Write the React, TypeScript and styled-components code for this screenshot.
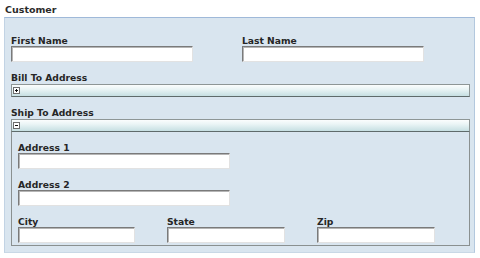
import React from "react";
import styled, { createGlobalStyle } from "styled-components";

const GlobalStyle = createGlobalStyle`
  html, body {
    margin: 0;
    padding: 0;
    background: #ffffff;
  }
  body {
    font-family: "DejaVu Sans", Verdana, sans-serif;
    color: #2b2b2b;
  }
`;

const Page = styled.div`
  width: 480px;
  height: 258px;
  padding: 4px 5px 0 4px;
  box-sizing: border-box;
`;

const Title = styled.div`
  font-size: 9.5px;
  font-weight: bold;
  line-height: 12px;
  padding-left: 1px;
  height: 13px;
`;

const Panel = styled.div`
  width: 471px;
  box-sizing: border-box;
  background: #d9e5ef;
  border-top: 1px solid #9fb9d9;
  border-left: 1px solid #c2d3e4;
  border-right: 1px solid #b3c8de;
  border-bottom: 1px solid #c9d8e6;
  padding: 17px 4px 6px 6px;
  display: flex;
  flex-direction: column;
  gap: 10px;
`;

const Grid = styled.div<{ $cols: string }>`
  display: grid;
  grid-template-columns: ${(p) => p.$cols};
  row-gap: 10px;
`;

const Field = styled.div`
  display: flex;
  flex-direction: column;
`;

const Label = styled.label`
  font-size: 9.2px;
  font-weight: bold;
  line-height: 11px;
  height: 11px;
  color: #262626;
  white-space: nowrap;
`;

const TextBox = styled.input<{ $w: number }>`
  width: ${(p) => p.$w}px;
  height: 16px;
  box-sizing: border-box;
  margin: 0;
  padding: 0 2px;
  background: #ffffff;
  border: 1px solid;
  border-color: #7a7a7a #e2e2e2 #e2e2e2 #7a7a7a;
  box-shadow: inset 1px 1px 0 #b5b5b5;
  font-family: inherit;
  font-size: 10px;
  outline: none;
`;

const Section = styled.div`
  display: flex;
  flex-direction: column;
`;

const Bar = styled.div`
  margin-top: 1px;
  height: 13px;
  box-sizing: border-box;
  border: 1px solid #8e9696;
  border-bottom-color: #5f6b6b;
  background: linear-gradient(#fbfdfd 0%, #e9f4f5 40%, #c6dfe2 100%);
  display: flex;
  align-items: center;
  padding-left: 1px;
`;

const Toggle = styled.span`
  width: 7px;
  height: 7px;
  box-sizing: border-box;
  border: 1px solid #6d6d6d;
  background: #ffffff;
  position: relative;
  display: inline-block;

  &::before {
    content: "";
    position: absolute;
    left: 1px;
    top: 2px;
    width: 3px;
    height: 1px;
    background: #111;
  }
`;

const PlusToggle = styled(Toggle)`
  &::after {
    content: "";
    position: absolute;
    left: 2px;
    top: 1px;
    width: 1px;
    height: 3px;
    background: #111;
  }
`;

const Body = styled.div`
  border: 1px solid #8a9090;
  border-top: none;
  padding: 10px 6px 2px 6px;
  display: flex;
  flex-direction: column;
  gap: 10px;
`;

export default function App() {
  return (
    <>
      <GlobalStyle />
      <Page>
        <Title>Customer</Title>
        <Panel>
          <Grid $cols="231px auto">
            <Field>
              <Label>First Name</Label>
              <TextBox $w={182} />
            </Field>
            <Field>
              <Label>Last Name</Label>
              <TextBox $w={182} />
            </Field>
          </Grid>

          <Section>
            <Label>Bill To Address</Label>
            <Bar>
              <PlusToggle />
            </Bar>
          </Section>

          <Section>
            <Label>Ship To Address</Label>
            <Bar>
              <Toggle />
            </Bar>
            <Body>
              <Field>
                <Label>Address 1</Label>
                <TextBox $w={212} />
              </Field>
              <Field>
                <Label>Address 2</Label>
                <TextBox $w={212} />
              </Field>
              <Grid $cols="149px 150px auto">
                <Field>
                  <Label>City</Label>
                  <TextBox $w={117} />
                </Field>
                <Field>
                  <Label>State</Label>
                  <TextBox $w={118} />
                </Field>
                <Field>
                  <Label>Zip</Label>
                  <TextBox $w={118} />
                </Field>
              </Grid>
            </Body>
          </Section>
        </Panel>
      </Page>
    </>
  );
}
